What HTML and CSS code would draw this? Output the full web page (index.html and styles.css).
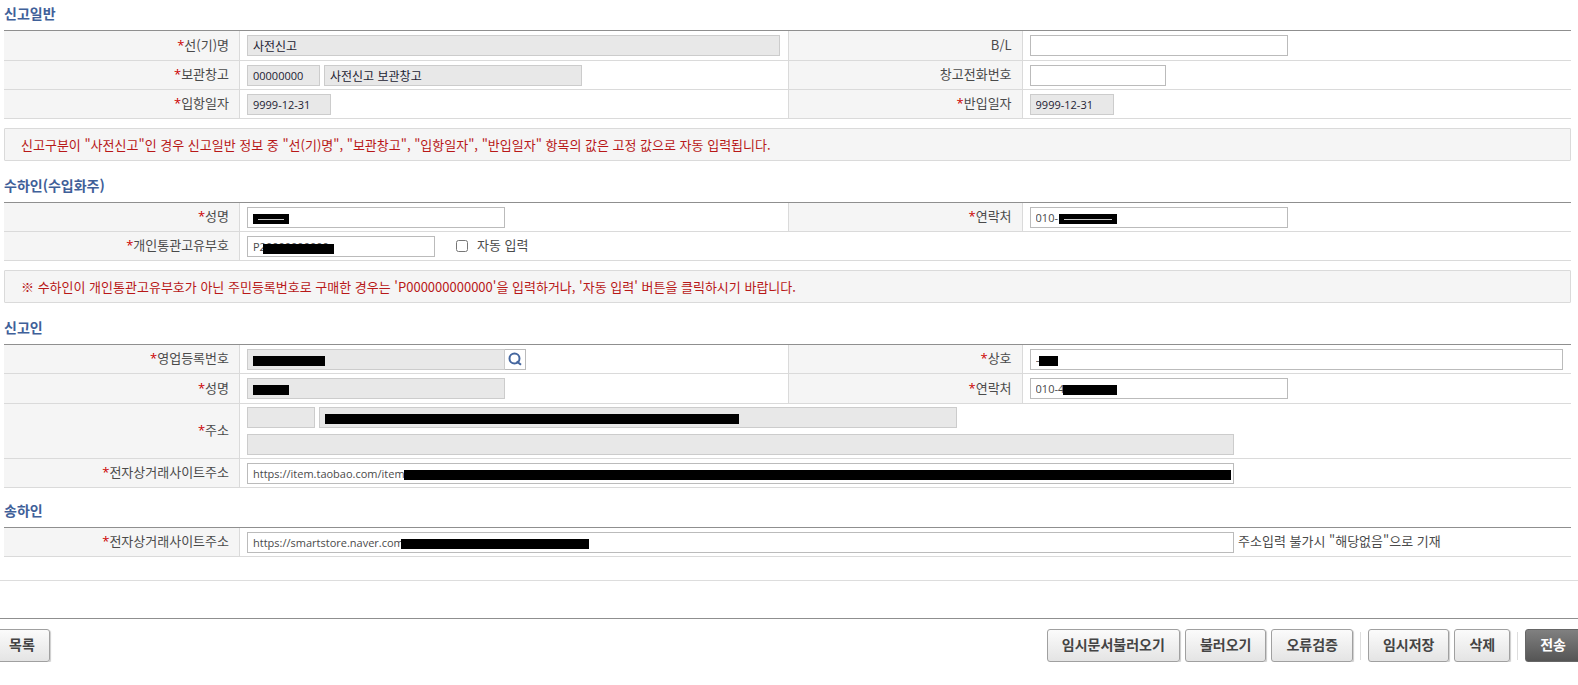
FILE: index.html
```html
<!DOCTYPE html>
<html lang="ko">
  <head>
    <meta charset="utf-8">
    <title>수입신고</title>
    <link rel="stylesheet" href="styles.css">
  </head>
  <body>
    <form>
      <div class="content">
        <h2>신고일반</h2>
        <table class="form">
          <colgroup><col class="c-first"><col><col class="c-th"><col class="c-td"></colgroup>
          <tr class="tall">
            <th><label for="ship"><em>*</em>선(기)명</label></th>
            <td><input type="text" id="ship" class="w-full ko" value="사전신고" readonly></td>
            <th class="mid"><label for="bl">B/L</label></th>
            <td><input type="text" id="bl" class="w-half"></td>
          </tr>
          <tr>
            <th><label for="whcode"><em>*</em>보관창고</label></th>
            <td>
              <div class="line">
                <input type="text" id="whcode" class="w-code" value="00000000" readonly>
                <input type="text" id="whname" class="w-half ko" value="사전신고 보관창고" aria-label="보관창고명" readonly>
              </div>
            </td>
            <th class="mid"><label for="whtel">창고전화번호</label></th>
            <td><input type="text" id="whtel" class="w-tel"></td>
          </tr>
          <tr>
            <th><label for="arrive"><em>*</em>입항일자</label></th>
            <td><input type="text" id="arrive" class="w-date" value="9999-12-31" readonly></td>
            <th class="mid"><label for="carry"><em>*</em>반입일자</label></th>
            <td><input type="text" id="carry" class="w-date" value="9999-12-31" readonly></td>
          </tr>
        </table>
        <p class="notice">신고구분이 "사전신고"인 경우 신고일반 정보 중 "선(기)명", "보관창고", "입항일자", "반입일자" 항목의 값은 고정 값으로 자동 입력됩니다.</p>

        <h2>수하인(수입화주)</h2>
        <table class="form">
          <colgroup><col class="c-first"><col><col class="c-th"><col class="c-td"></colgroup>
          <tr>
            <th><label for="rname"><em>*</em>성명</label></th>
            <td>
              <div class="field w-half">
                <input type="text" id="rname">
                <span class="mask m-name lined"></span>
              </div>
            </td>
            <th class="mid"><label for="rtel"><em>*</em>연락처</label></th>
            <td>
              <div class="field w-half">
                <input type="text" id="rtel" value="010-">
                <span class="mask m-tel lined"></span>
              </div>
            </td>
          </tr>
          <tr>
            <th><label for="pcc"><em>*</em>개인통관고유부호</label></th>
            <td colspan="3">
              <div class="line">
                <div class="field w-pcc">
                  <input type="text" id="pcc" value="P20000000000">
                  <span class="mask m-pcc"></span>
                </div>
                <label class="auto"><input type="checkbox"> 자동 입력</label>
              </div>
            </td>
          </tr>
        </table>
        <p class="notice">※ 수하인이 개인통관고유부호가 아닌 주민등록번호로 구매한 경우는 'P000000000000'을 입력하거나, '자동 입력' 버튼을 클릭하시기 바랍니다.</p>

        <h2>신고인</h2>
        <table class="form">
          <colgroup><col class="c-first"><col><col class="c-th"><col class="c-td"></colgroup>
          <tr>
            <th><label for="regno"><em>*</em>영업등록번호</label></th>
            <td>
              <div class="line joined">
                <div class="field w-half">
                  <input type="text" id="regno" readonly>
                  <span class="mask m-reg"></span>
                </div>
                <button type="button" class="search" aria-label="검색">
                  <svg width="14" height="14" viewBox="0 0 14 14" fill="none" stroke="#44669f" stroke-width="2">
                    <circle cx="6.5" cy="6.5" r="5"/>
                    <path d="M8.6 9.4l4.4 3.4"/>
                  </svg>
                </button>
              </div>
            </td>
            <th class="mid"><label for="company"><em>*</em>상호</label></th>
            <td>
              <div class="field w-full">
                <input type="text" id="company" class="ko" value="ㅗ">
                <span class="mask m-company"></span>
              </div>
            </td>
          </tr>
          <tr class="tall">
            <th><label for="dname"><em>*</em>성명</label></th>
            <td>
              <div class="field w-half">
                <input type="text" id="dname" readonly>
                <span class="mask m-name"></span>
              </div>
            </td>
            <th class="mid"><label for="dtel"><em>*</em>연락처</label></th>
            <td>
              <div class="field w-half">
                <input type="text" id="dtel" value="010-4">
                <span class="mask m-tel2"></span>
              </div>
            </td>
          </tr>
          <tr class="double">
            <th><label for="zip"><em>*</em>주소</label></th>
            <td colspan="3">
              <div class="line">
                <input type="text" id="zip" class="w-zip" readonly>
                <div class="field w-addr">
                  <input type="text" id="addr1" aria-label="기본주소" readonly>
                  <span class="mask m-addr"></span>
                </div>
              </div>
              <input type="text" id="addr2" class="w-long" aria-label="상세주소" readonly>
            </td>
          </tr>
          <tr>
            <th><label for="dsite"><em>*</em>전자상거래사이트주소</label></th>
            <td colspan="3">
              <div class="field w-long">
                <input type="text" id="dsite" value="https://item.taobao.com/item.">
                <span class="mask m-dsite"></span>
              </div>
            </td>
          </tr>
        </table>

        <h2>송하인</h2>
        <table class="form">
          <colgroup><col class="c-first"><col><col class="c-th"><col class="c-td"></colgroup>
          <tr>
            <th><label for="ssite"><em>*</em>전자상거래사이트주소</label></th>
            <td colspan="3">
              <div class="line">
                <div class="field w-long">
                  <input type="text" id="ssite" value="https://smartstore.naver.com/">
                  <span class="mask m-ssite"></span>
                </div>
                <span class="hint">주소입력 불가시 "해당없음"으로 기재</span>
              </div>
            </td>
          </tr>
        </table>
      </div>

      <div class="buttons">
        <button type="button">목록</button>
        <div class="right">
          <button type="button">임시문서불러오기</button>
          <button type="button">불러오기</button>
          <button type="button">오류검증</button>
          <i class="bar"></i>
          <button type="button">임시저장</button>
          <button type="button">삭제</button>
          <i class="bar"></i>
          <button type="submit" class="send">전송</button>
        </div>
      </div>
    </form>
  </body>
</html>
```
FILE: styles.css
```css
* {
  box-sizing: border-box;
}

body {
  margin: 0;
  overflow-x: hidden;
  background: #fff;
  color: #4a4a4a;
  font: 13px/18px "Noto Sans CJK KR", sans-serif;
}

button {
  font-family: inherit;
}

.content {
  padding: 3px 7px 23px 4px;
  border-bottom: 1px solid #ddd;
}

h2 {
  margin: 0 0 7px;
  color: #3f6099;
  font-size: 14px;
  font-weight: bold;
  line-height: 20px;
}

/* form tables */
.form {
  width: 100%;
  table-layout: fixed;
  border-spacing: 0;
  border-top: 1px solid #8f8f8f;
}

.form + h2 {
  margin-top: 12px;
}

.c-first {
  width: 236px;
}

.c-th {
  width: 15%;
}

.c-td {
  width: 35%;
}

th, td {
  height: 29px;
  border-bottom: 1px solid #dadada;
}

.tall th, .tall td {
  height: 30px;
}

.double th, .double td {
  height: 55px;
}

th {
  padding: 0 10px 2px 0;
  background: #f5f5f5;
  border-right: 1px solid #dadada;
  font-weight: normal;
  text-align: right;
}

th.mid {
  border-left: 1px solid #dadada;
}

th em {
  color: #c00;
  font-family: "Open Sans", sans-serif;
  font-style: normal;
}

td {
  padding: 0 8px 0 7px;
}

input[type="text"] {
  display: block;
  height: 21px;
  padding: 0 5px;
  background: #fff;
  border: 1px solid #bbb;
  color: #4a4a4a;
  font: 11px "Open Sans", "Noto Sans CJK KR", sans-serif;
}

input[type="text"].ko {
  font: 12px "Noto Sans CJK KR", sans-serif;
}

input[type="text"]:read-only {
  background: #e8e8e8;
  border-color: #ccc;
  color: #223;
}

.double .line {
  margin-bottom: 6px;
}

.line {
  display: flex;
  align-items: center;
  gap: 4px;
}

.joined {
  gap: 0;
}

.field {
  position: relative;
}

.field input[type="text"] {
  width: 100%;
}

.w-full { width: 100%; }
.w-half { width: 258px; }
.w-code { width: 73px; }
.w-tel { width: 136px; }
.w-date { width: 84px; }
.w-pcc { width: 188px; }
.w-zip { width: 68px; }
.w-addr { width: 638px; }
.w-long { width: 75%; }

.auto, .hint {
  padding-bottom: 2px;
}

.auto {
  display: flex;
  align-items: center;
  gap: 9px;
  margin-left: 17px;
}

.auto input {
  width: 12px;
  height: 12px;
  margin: 2px 0 0;
}

.search {
  display: flex;
  align-items: center;
  justify-content: center;
  width: 21px;
  height: 21px;
  padding: 0;
  background: #fff;
  border: 1px solid #bbb;
  border-left: 0;
}

/* blacked out personal data */
.mask {
  position: absolute;
  top: 7px;
  left: 6px;
  height: 10px;
  background: #000;
}

.m-name { width: 36px; }
.m-tel { left: 29px; width: 58px; }
.m-tel2 { left: 33px; width: 54px; }
.m-pcc { top: 8px; left: 16px; width: 71px; }
.m-reg { width: 72px; }
.m-company { left: 9px; width: 19px; }
.m-addr { width: 414px; }
.m-dsite { left: 157px; right: 3px; }
.m-ssite { left: 154px; width: 188px; }

.lined::after {
  content: "";
  position: absolute;
  top: 5px;
  left: 5px;
  right: 5px;
  border-top: 1px solid #ccc;
}

.notice {
  margin: 9px 0 14px;
  padding: 7px 16px;
  background: #f5f5f5;
  border: 1px solid #dadada;
  border-radius: 1px;
  color: #b81818;
  line-height: 17px;
}

/* bottom buttons, run past both window edges */
.buttons {
  display: flex;
  justify-content: space-between;
  margin: 37px -3px 0 -6px;
  padding-top: 10px;
  border-top: 1px solid #8f8f8f;
}

.right {
  display: flex;
  align-items: center;
  gap: 5px;
}

.buttons button {
  height: 33px;
  padding: 0 14px 3px;
  background: linear-gradient(#fbfbfb, #e4e4e4);
  border: 1px solid #a0a0a0;
  border-radius: 3px;
  box-shadow: 1px 1px 1px #ccc;
  color: #444;
  font-size: 14px;
  font-weight: bold;
}

.buttons .send {
  background: linear-gradient(#808080, #555);
  border-color: #666;
  color: #fff;
}

.bar {
  width: 1px;
  height: 28px;
  margin: 0 2px;
  background: #ddd;
}
```
